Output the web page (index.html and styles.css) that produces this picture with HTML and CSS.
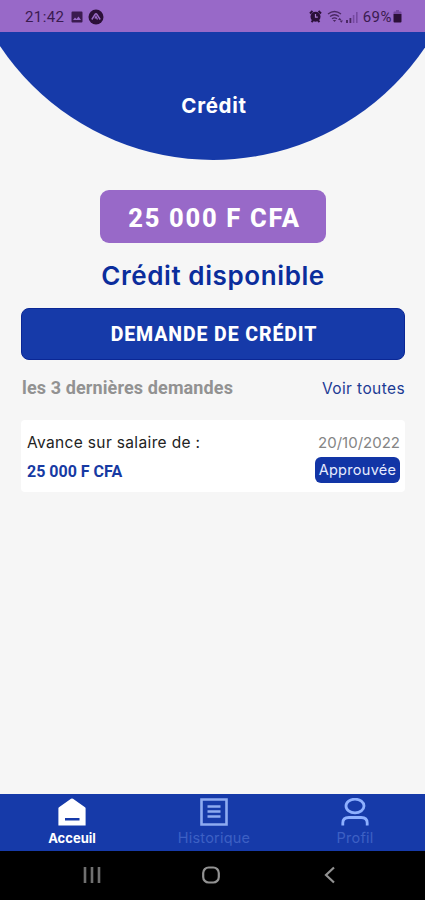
FILE: index.html
```html
<!DOCTYPE html>
<html lang="fr">
<head>
<meta charset="UTF-8">
<meta name="viewport" content="width=device-width, initial-scale=1.0">
<title>Crédit</title>
<link rel="stylesheet" href="styles.css">
</head>
<body>

<div class="status-bar">
    <div class="status-left">
        <span class="clock">21:42</span>
        <svg width="12" height="12" viewBox="0 0 12 12"><path fill="#3b1b50" fill-rule="evenodd" d="M1.500 .5h9a1 1 0 0 1 1 1v9a1 1 0 0 1-1 1h-9a1 1 0 0 1-1-1v-9a1 1 0 0 1 1-1zM2 9h8L7.500 5.500 5.500 8 4 6.500z"/></svg>
        <svg class="expo" width="16" height="16" viewBox="0 0 16 16"><circle cx="8" cy="8" r="7.500" fill="#2b1038"/><path d="M3.800 10.500 7 5.500q1-1.500 2 0l3.200 5M7 9.500l1-2 1.500 3" fill="none" stroke="#9a6bc6" stroke-width="1.400"/></svg>
    </div>
    <div class="status-right">
        <svg width="13" height="13" viewBox="0 0 13 13"><path d="M1 3.500 3.500 1M12 3.500 9.500 1M2.500 12l1.500-1.500M10.500 12 9 10.500" stroke="#2b1038" stroke-width="2"/><circle cx="6.500" cy="6.800" r="5" fill="#2b1038"/><path d="M6.500 4v3.200h2.300" fill="none" stroke="#a87bd0" stroke-width="1.200"/></svg>
        <svg class="wifi" width="17" height="13" viewBox="0 0 17 13"><g fill="none" stroke="#4b2863" stroke-width="1.300"><path d="M1 4q6.500-5 13 0M3 6.500q4.500-3.500 9 0M5 8.800q2.500-2 5 0"/></g><path d="M7.500 12 5.800 10h3.400zM11 10l1.700-2.200L14.400 10zM12.600 10.500H16l-1.700 2.200z" fill="#4b2863"/></svg>
        <svg width="12" height="12" viewBox="0 0 12 12"><path d="M0 9h2v3H0zM3.500 7h1.800v5H3.500z" fill="#4b2863"/><path d="M6.800 4h1.600v8H6.800zM10 1h1.600v11H10z" fill="#7549a0"/></svg>
        <span class="battery-text">69%</span>
        <svg width="9" height="13" viewBox="0 0 9 13"><path d="M3 0h3v1.500h1.500q1 0 1 1V4H.500V2.500q0-1 1-1H3z" fill="#7549a0"/><path d="M.500 4h8v7.500q0 1-1 1h-6q-1 0-1-1z" fill="#2b1038"/></svg>
    </div>
</div>

<header class="header">
    <h1 class="title">Crédit</h1>
</header>

<main class="content">
    <div class="amount">25 000 F CFA</div>
    <h2 class="available">Crédit disponible</h2>
    <button class="request-btn" type="button">DEMANDE DE CRÉDIT</button>

    <div class="list-head">
        <span class="list-title">les 3 dernières demandes</span>
        <a class="see-all">Voir toutes</a>
    </div>

    <div class="card">
        <div class="card-row">
            <span class="card-label">Avance sur salaire de :</span>
            <span class="card-date">20/10/2022</span>
        </div>
        <div class="card-row">
            <span class="card-amount">25 000 F CFA</span>
            <span class="badge">Approuvée</span>
        </div>
    </div>
</main>

<nav class="tabs">
    <a class="tab active">
        <svg width="28" height="28" viewBox="0 0 28 28"><path d="M13 .8q1-.7 2 0l12 8.400q.600.400.600 1V27.500H.400V10.200q0-.600.600-1zM7 20V22.500h14.500v-2.500z" fill="#fff" fill-rule="evenodd"/></svg>
        <span class="tab-label">Acceuil</span>
    </a>
    <a class="tab">
        <svg width="28" height="28" viewBox="0 0 28 28"><path d="M1.500 1.500h25v25h-25zM7.500 8.500h13M7.500 13.500h13M7.500 18.500h13" fill="none" stroke="#8eabf0" stroke-width="2.600"/></svg>
        <span class="tab-label">Historique</span>
    </a>
    <a class="tab">
        <svg width="28" height="28" viewBox="0 0 28 28"><g fill="none" stroke="#8eb0ff" stroke-width="2.800"><ellipse cx="14" cy="8" rx="9" ry="6.800"/><path d="M1.800 27.500V25q0-5.500 6-5.500h12.400q6 0 6 5.500v2.500"/></g></svg>
        <span class="tab-label">Profil</span>
    </a>
</nav>

<div class="android-nav">
    <svg width="18" height="18" viewBox="0 0 18 18"><path d="M2 1v16M9 1v16M16 1v16" stroke="#707070" stroke-width="2.600"/></svg>
    <svg width="18" height="18" viewBox="0 0 18 18"><rect x="1.200" y="1.500" width="15.600" height="15" rx="5.500" fill="none" stroke="#929292" stroke-width="2.200"/></svg>
    <svg width="18" height="18" viewBox="0 0 18 18"><path d="M13 1.500 5 9l8 7.500" fill="none" stroke="#929292" stroke-width="2.200"/></svg>
</div>

</body>
</html>
```
FILE: styles.css
```css
* {
    box-sizing: border-box;
}
body {
    margin: 0;
    height: 900px;
    display: flex;
    flex-direction: column;
    background: #f6f6f6;
    font-family: Inter, "Liberation Sans", sans-serif;
    white-space: nowrap;
    overflow: hidden;
}
.status-bar {
    height: 32px;
    padding: 1px 23px 0 25px;
    display: flex;
    justify-content: space-between;
    align-items: center;
    background: #9869c8;
    color: #3b1b50;
    font-family: Roboto, sans-serif;
    font-size: 15px;
}
.status-left, .status-right {
    display: flex;
    align-items: center;
}
.clock {
    margin-right: 7px;
    letter-spacing: 0.4px;
}
.expo {
    margin-left: 5px;
}
.wifi {
    margin: 0 2px 0 5px;
}
.battery-text {
    margin: 0 1px 0 5px;
    letter-spacing: 0.5px;
}
.header {
    height: 128px;
    padding: 60px 0 0 3px;
    background: #163aa9;
    clip-path: circle(256px at 213px -128px);
}
.title {
    margin: 0;
    color: #fff;
    font-size: 20.5px;
    line-height: 27px;
    font-weight: 700;
    text-align: center;
    letter-spacing: 0.7px;
}
.content {
    flex: 1;
    padding: 30px 20px 0 21px;
    display: flex;
    flex-direction: column;
}
.amount {
    align-self: center;
    width: 226px;
    height: 53px;
    padding-left: 3px;
    border-radius: 9px;
    background: #9869c8;
    color: #fff;
    font: 800 25.5px/56px Roboto, sans-serif;
    letter-spacing: 1.7px;
    text-align: center;
}
.available {
    margin: 17px 0 16px;
    color: #0b2d9c;
    font-size: 26px;
    line-height: 32px;
    font-weight: 600;
    text-align: center;
    letter-spacing: 0.6px;
}
.request-btn {
    height: 52px;
    padding: 1px 0 0 2px;
    border: 1px solid #0b2795;
    border-radius: 8px;
    background: #163aa9;
    color: #fff;
    font: 800 19.5px/50px Roboto, sans-serif;
    letter-spacing: 0.9px;
}
.list-head {
    height: 60px;
    padding: 0 0 4px 1px;
    display: flex;
    justify-content: space-between;
    align-items: center;
}
.list-title {
    color: #929292;
    font: 700 18px/24px Roboto, sans-serif;
    letter-spacing: 0.12px;
}
.see-all {
    color: #1b3a94;
    font-size: 15.5px;
    letter-spacing: 0.4px;
}
.card {
    height: 72px;
    padding: 8px 5px 0 6px;
    border-radius: 4px;
    background: #fff;
}
.card-row {
    height: 29px;
    display: flex;
    justify-content: space-between;
    align-items: center;
}
.card-label {
    color: #222;
    font-size: 15.5px;
    letter-spacing: 0.35px;
}
.card-date {
    color: #858585;
    font-size: 15px;
}
.card-amount {
    color: #173aa3;
    font: 700 16px/20px Roboto, sans-serif;
}
.badge {
    width: 85px;
    height: 26px;
    margin-bottom: 3px;
    border-radius: 6px;
    background: #1235a6;
    color: #e6ecff;
    font-size: 14.5px;
    line-height: 26px;
    text-align: center;
    letter-spacing: 0.3px;
}
.tabs {
    height: 57px;
    padding: 4px 0 0 1px;
    display: grid;
    grid-template-columns: 142px 142px 140px;
    background: #163aa9;
}
.tab {
    display: flex;
    flex-direction: column;
    align-items: center;
    color: #3d60c4;
}
.tab-label {
    font-size: 14.5px;
    line-height: 18px;
    margin-top: 3px;
    letter-spacing: 0.2px;
}
.active .tab-label {
    color: #fff;
    font-size: 13px;
    font-weight: 700;
    letter-spacing: 0;
}
.android-nav {
    height: 49px;
    padding: 0 86px 2px 83px;
    display: flex;
    justify-content: space-between;
    align-items: center;
    background: #000;
}
```
